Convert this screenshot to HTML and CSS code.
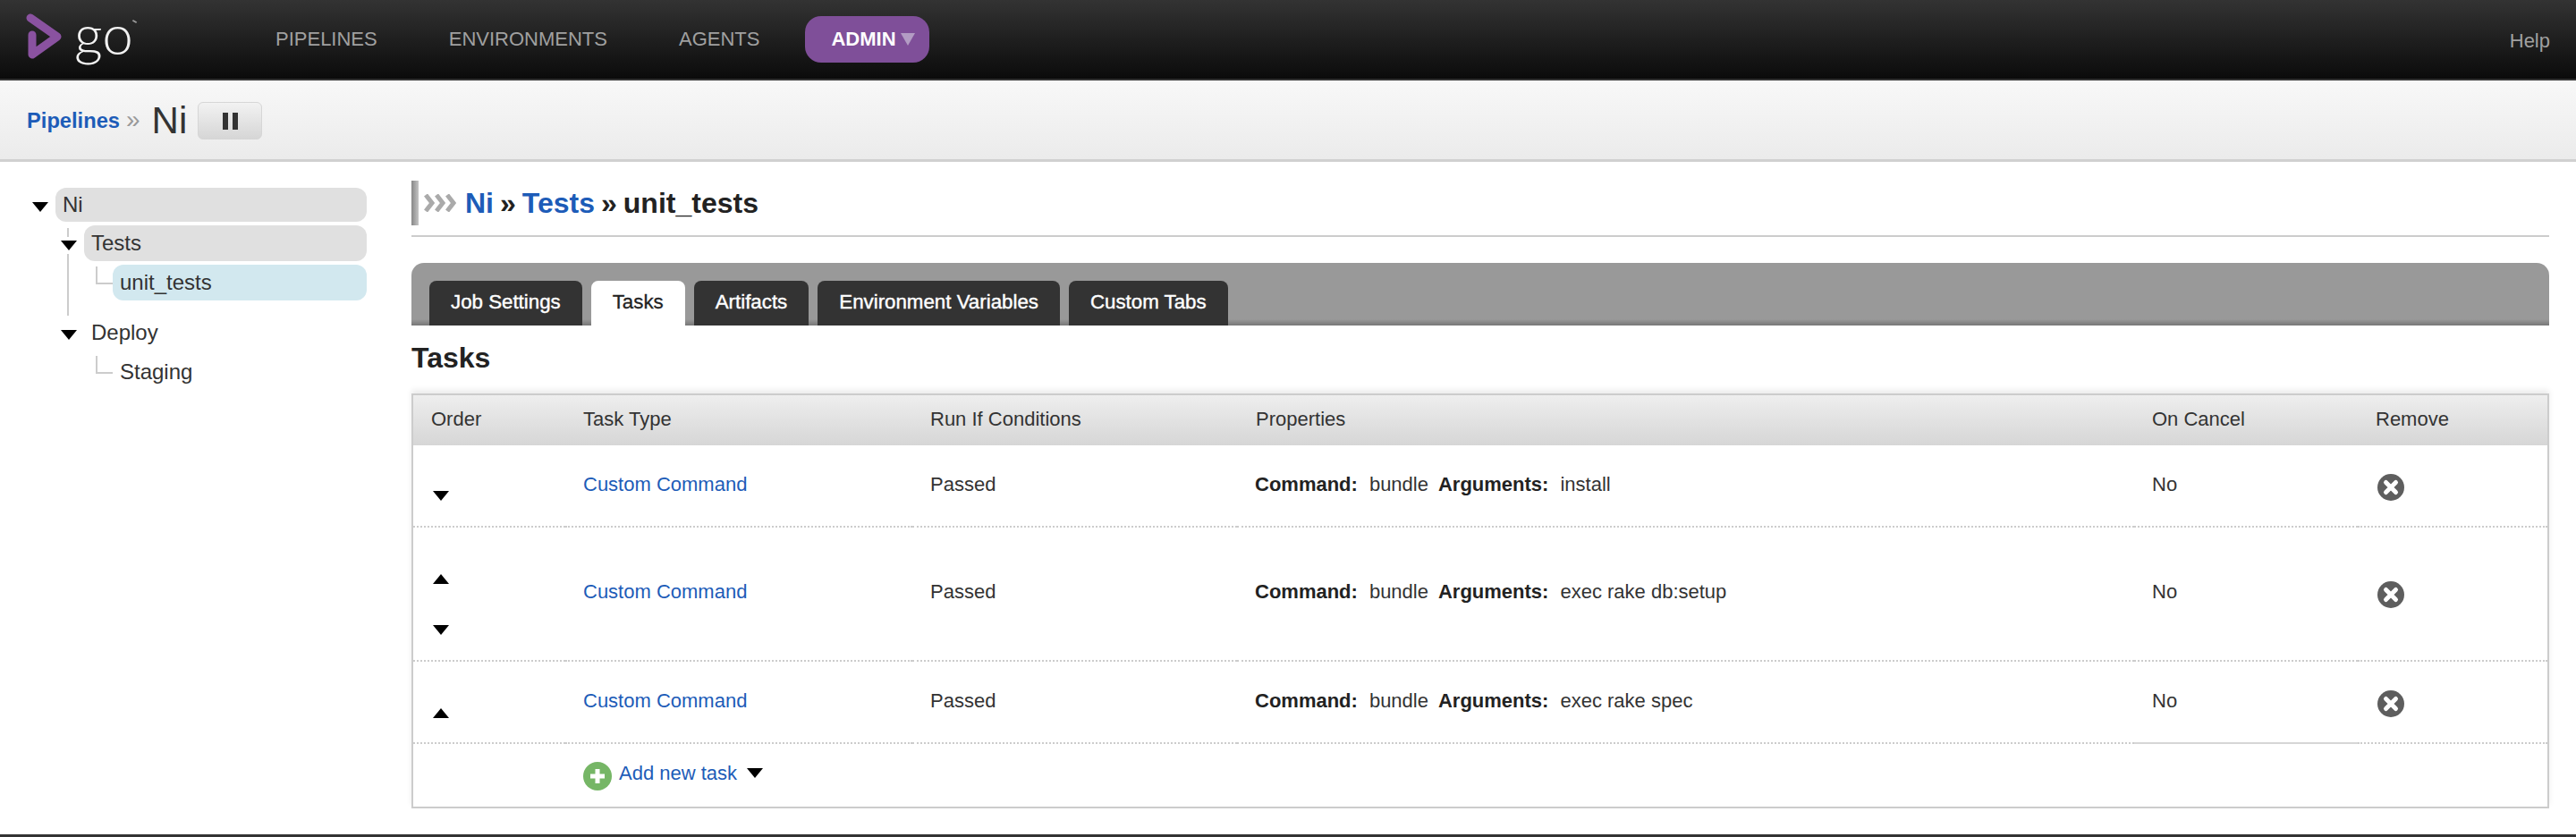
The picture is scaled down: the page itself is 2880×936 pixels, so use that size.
FILE: index.html
```html
<!DOCTYPE html>
<html lang="en">
<head>
<meta charset="utf-8">
<title>Go - Tasks</title>
<link rel="stylesheet" href="styles.css">
</head>
<body>
<header class="topbar">
  <a class="logo">
    <svg class="logo-mark" width="44" height="56" viewBox="0 0 44 56"><path d="M6 5 L36 26 L8 46 L8 24" fill="none" stroke="#8a52a0" stroke-width="9" stroke-linejoin="round" stroke-linecap="round"/></svg>
    <span class="logo-text">go</span>
    <span class="logo-tm"></span>
  </a>
  <nav class="mainnav">
    <a class="navlink">PIPELINES</a>
    <a class="navlink">ENVIRONMENTS</a>
    <a class="navlink">AGENTS</a>
  </nav>
  <a class="admin">ADMIN<span class="admin-caret"></span></a>
  <a class="help">Help</a>
</header>

<section class="subbar">
  <a class="crumb">Pipelines</a>
  <span class="crumb-sep">»</span>
  <span class="crumb-current">Ni</span>
  <button class="pause" type="button"><span class="pause-bar"></span><span class="pause-bar"></span></button>
</section>

<main class="page">
  <aside class="tree">
    <div class="node node-pipeline"><span class="tri-down tree-toggle"></span><span class="pill pill-grey pill-ni">Ni</span></div>
    <div class="node node-stage"><span class="vline vline-a"></span><span class="vline vline-b"></span><span class="tri-down tree-toggle"></span><span class="pill pill-grey">Tests</span></div>
    <div class="node node-job"><span class="elbow"></span><span class="pill pill-blue">unit_tests</span></div>
    <div class="node node-stage node-deploy"><span class="tri-down tree-toggle"></span><span class="pill">Deploy</span></div>
    <div class="node node-job node-staging"><span class="elbow"></span><span class="pill">Staging</span></div>
  </aside>

  <section class="content">
    <h1 class="title">
      <span class="title-bar"></span>
      <svg class="title-chev" width="36" height="20" viewBox="0 0 36 20"><path d="M2 1 L9 10 L2 19 M14 1 L21 10 L14 19 M26 1 L33 10 L26 19" fill="none" stroke="#aaa" stroke-width="5"/></svg>
      <span class="title-text"><a class="title-link">Ni</a><span class="title-sep">»</span><a class="title-link">Tests</a><span class="title-sep">»</span><span>unit_tests</span></span>
    </h1>

    <div class="tabs">
      <a class="tab">Job Settings</a>
      <a class="tab tab-active">Tasks</a>
      <a class="tab">Artifacts</a>
      <a class="tab">Environment Variables</a>
      <a class="tab">Custom Tabs</a>
    </div>

    <h2 class="heading">Tasks</h2>

    <div class="table-wrap">
      <table class="tasks">
        <colgroup>
          <col class="c-order"><col class="c-type"><col class="c-run"><col class="c-props"><col class="c-cancel"><col class="c-remove">
        </colgroup>
        <thead>
          <tr><th>Order</th><th>Task Type</th><th>Run If Conditions</th><th class="th-props">Properties</th><th>On Cancel</th><th>Remove</th></tr>
        </thead>
        <tbody>
          <tr class="row-short">
            <td class="order"><span class="tri-down move move-first"></span></td>
            <td><a class="link">Custom Command</a></td>
            <td>Passed</td>
            <td class="props"><b class="prop-label">Command:</b><span class="prop-value">bundle</span><b class="prop-label">Arguments:</b><span class="prop-value">install</span></td>
            <td>No</td>
            <td><svg class="remove" width="30" height="30" viewBox="0 0 30 30"><circle cx="15" cy="15" r="15" fill="#5e5e5e"/><path d="M9.5 9.5 L20.5 20.5 M20.5 9.5 L9.5 20.5" stroke="#fff" stroke-width="5" stroke-linecap="round"/></svg></td>
          </tr>
          <tr class="row-tall">
            <td class="order"><span class="tri-up move"></span><span class="tri-down move move-next"></span></td>
            <td><a class="link">Custom Command</a></td>
            <td>Passed</td>
            <td class="props"><b class="prop-label">Command:</b><span class="prop-value">bundle</span><b class="prop-label">Arguments:</b><span class="prop-value">exec rake db:setup</span></td>
            <td>No</td>
            <td><svg class="remove" width="30" height="30" viewBox="0 0 30 30"><circle cx="15" cy="15" r="15" fill="#5e5e5e"/><path d="M9.5 9.5 L20.5 20.5 M20.5 9.5 L9.5 20.5" stroke="#fff" stroke-width="5" stroke-linecap="round"/></svg></td>
          </tr>
          <tr class="row-short">
            <td class="order"><span class="tri-up move"></span></td>
            <td><a class="link">Custom Command</a></td>
            <td>Passed</td>
            <td class="props"><b class="prop-label">Command:</b><span class="prop-value">bundle</span><b class="prop-label">Arguments:</b><span class="prop-value">exec rake spec</span></td>
            <td class="cancel-last">No</td>
            <td><svg class="remove" width="30" height="30" viewBox="0 0 30 30"><circle cx="15" cy="15" r="15" fill="#5e5e5e"/><path d="M9.5 9.5 L20.5 20.5 M20.5 9.5 L9.5 20.5" stroke="#fff" stroke-width="5" stroke-linecap="round"/></svg></td>
          </tr>
          <tr class="row-add">
            <td></td>
            <td colspan="5">
              <div class="add">
                <svg class="add-icon" width="32" height="32" viewBox="0 0 32 32"><circle cx="16" cy="16" r="16" fill="#76b666"/><path d="M16 8 V24 M8 16 H24" stroke="#fff" stroke-width="5"/></svg>
                <a class="link">Add new task</a>
                <span class="tri-down add-caret"></span>
              </div>
            </td>
          </tr>
        </tbody>
      </table>
    </div>
  </section>
</main>
<footer class="foot"></footer>
</body>
</html>
```
FILE: styles.css
```css
* { box-sizing: border-box; }
html, body { margin: 0; padding: 0; }
body {
  width: 2880px;
  height: 936px;
  overflow: hidden;
  background: #fff;
  color: #333;
  font-family: "Liberation Sans", Arial, sans-serif;
  font-size: 22px;
  display: flex;
  flex-direction: column;
}
a { color: inherit; text-decoration: none; }

/* top bar */
.topbar {
  height: 90px;
  flex: none;
  display: flex;
  align-items: flex-start;
  background: linear-gradient(#333, #0b0b0b);
  border-bottom: 2px solid #333;
  padding-left: 28px;
  position: relative;
}
.logo { width: 280px; height: 88px; display: flex; position: relative; }
.logo-mark { margin-top: 15px; flex: none; }
.logo-text {
  font-family: Lato, sans-serif;
  font-weight: 300;
  font-size: 62px;
  line-height: 62px;
  color: #f2f2f2;
  margin: 6px 0 0 11px;
}
.logo-tm {
  position: absolute;
  left: 120px;
  top: 23px;
  width: 5px;
  height: 2px;
  background: #999;
  transform: rotate(30deg);
}
.mainnav { display: flex; gap: 80px; height: 88px; align-items: center; }
.navlink { color: #a0a0a0; font-size: 22px; }
.admin {
  margin: 18px 0 0 51px;
  width: 139px;
  height: 52px;
  border-radius: 18px;
  background: #7f4f99;
  color: #fff;
  font-weight: bold;
  display: flex;
  align-items: center;
  padding-left: 29px;
}
.admin-caret {
  margin-left: 5px;
  width: 0;
  height: 0;
  border-left: 8px solid transparent;
  border-right: 8px solid transparent;
  border-top: 14px solid #b39cc4;
}
.help { margin-left: auto; margin-right: 29px; height: 88px; display: flex; align-items: center; color: #a0a0a0; padding-top: 3px; }

/* sub bar */
.subbar {
  height: 91px;
  flex: none;
  display: flex;
  align-items: flex-start;
  padding-left: 30px;
  background: linear-gradient(#f8f8f8, #ebebeb);
  border-bottom: 3px solid #d0d0d0;
}
.crumb { color: #1d5cb8; font-weight: bold; font-size: 23.7px; line-height: 90px; }
.crumb-sep { color: #999; font-size: 28px; line-height: 88px; margin: 0 13px 0 7px; }
.crumb-current { font-size: 42px; line-height: 90px; }
.pause {
  width: 72px;
  height: 42px;
  margin: 24px 0 0 12px;
  padding: 0;
  border: 1px solid #d6d6d6;
  border-radius: 6px;
  background: linear-gradient(#f2f2f2, #d6d6d6);
  display: flex;
  align-items: center;
  justify-content: center;
  gap: 5px;
}
.pause-bar { width: 6px; height: 19px; background: #333; }

/* tree */
.page { flex: 1; display: flex; min-height: 0; }
.tree { width: 460px; flex: none; padding-top: 29px; color: #333; font-size: 24px; }
.node { position: relative; display: flex; align-items: center; margin-top: 4px; margin-right: 50px; }
.node:first-child { margin-top: 0; }
.node-pipeline { height: 38px; padding-left: 36px; }
.node-stage { height: 40px; padding-left: 68px; }
.node-job { height: 40px; padding-left: 126px; }
.node-deploy { margin-top: 16px; }
.node-staging { margin-top: 4px; }
.tree-toggle { flex: none; margin-right: 8px; }
.node-pipeline .tree-toggle, .node-stage .tree-toggle { position: relative; top: 2px; }
.pill { flex: 1; height: 100%; display: flex; align-items: center; padding-left: 8px; border-radius: 12px; }
.pill-grey { background: #e0e0e0; }
.pill-blue { background: #d2e8ef; }
.vline { position: absolute; left: 75px; width: 2px; background: #ccc; }
.vline-a { top: 3px; height: 10px; }
.vline-b { top: 32px; height: 69px; }
.elbow {
  position: absolute;
  left: 107px;
  top: 2px;
  width: 19px;
  height: 20px;
  border-left: 2px solid #ccc;
  border-bottom: 2px solid #ccc;
}

/* triangles */
.tri-down, .tri-up { display: block; width: 0; height: 0; border-left: 9px solid transparent; border-right: 9px solid transparent; }
.tri-down { border-top: 11px solid #000; }
.tri-up { border-bottom: 11px solid #000; }

/* content */
.content { width: 2390px; flex: none; padding-top: 21px; }
.title {
  margin: 0;
  height: 63px;
  padding-bottom: 11px;
  border-bottom: 2px solid #ccc;
  display: flex;
  align-items: center;
  font-size: 32px;
  font-weight: bold;
  color: #222;
}
.title-bar { width: 8px; height: 50px; background: linear-gradient(90deg, #888, #c4c4c4); margin-right: 6px; }
.title-chev { margin-right: 10px; }
.title-link { color: #1d5cb8; }
.title-sep { margin: 0 7px; }
.tabs {
  margin-top: 29px;
  height: 70px;
  display: flex;
  align-items: flex-end;
  gap: 10px;
  padding-left: 20px;
  border-radius: 14px 14px 0 0;
  background: linear-gradient(#999 0, #999 90%, #777 100%);
}
.tab {
  height: 50px;
  display: flex;
  align-items: center;
  padding: 0 24px 2px;
  background: #333;
  color: #fff;
  font-size: 22.3px;
  -webkit-text-stroke: .4px #fff;
  border-radius: 8px 8px 0 0;
}
.tab-active { background: #fff; color: #222; -webkit-text-stroke: .3px #222; }
.heading { margin: 16px 0 20px; height: 40px; line-height: 40px; font-size: 32px; font-weight: bold; color: #222; }

/* table */
.table-wrap { border: 2px solid #ccc; height: 464px; box-shadow: 0 -4px 6px rgba(0,0,0,.08); }
.tasks { width: 2386px; table-layout: fixed; border-collapse: separate; border-spacing: 0; }
.c-order { width: 170px; }
.c-type { width: 388px; }
.c-run { width: 363px; }
.c-props { width: 1003px; }
.c-cancel { width: 250px; }
.c-remove { width: 212px; }
.tasks th {
  height: 56px;
  padding: 0 20px 3px;
  text-align: left;
  font-weight: normal;
  background: linear-gradient(#eee, #d6d6d6);
}
.tasks .th-props { padding-left: 21px; }
.tasks td { padding: 0 20px 2px; border-bottom: 2px dotted #ccc; vertical-align: middle; }
.tasks .props { padding-left: 20px; }
.row-short { height: 92px; }
.row-tall { height: 150px; }
.row-tall td { padding-bottom: 4px; }
.tasks .order { vertical-align: top; padding: 0 22px; }
.move { margin-top: 52px; }
.move-first { margin-top: 51px; }
.move-next { margin-top: 46px; }
.tasks .cancel-last { border-bottom: 2px solid #d6d6d6; }
.link { color: #1d5cb8; }
.prop-label { margin-right: 13px; color: #222; }
.prop-value { margin-right: 11px; }
.remove { display: block; margin: 6px 0 0 2px; }
.tasks .row-add td { border-bottom: 0; height: 70px; padding-bottom: 0; vertical-align: top; }
.add { display: flex; align-items: flex-start; padding-top: 20px; }
.add-icon { flex: none; margin-right: 8px; }
.add .link { line-height: 26px; }
.add-caret { margin: 7px 0 0 11px; }

.foot { height: 3px; flex: none; background: #333; }
```
